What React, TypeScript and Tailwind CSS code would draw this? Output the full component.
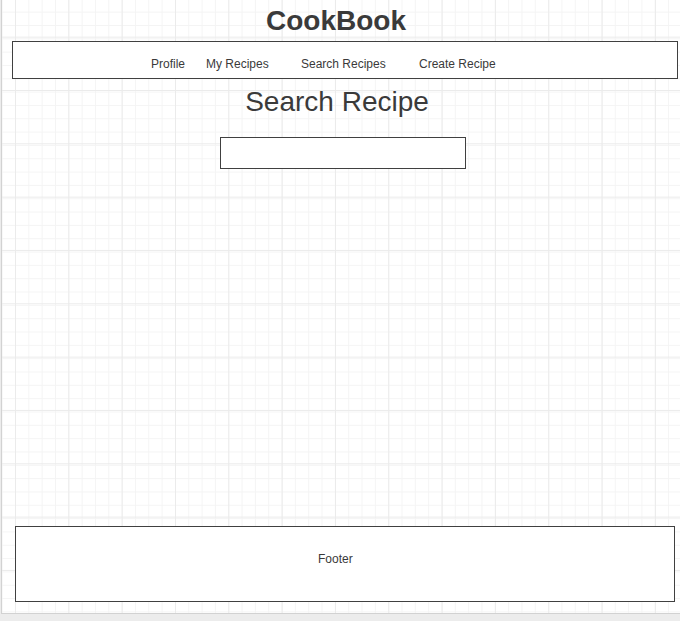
import React from 'react';

const navItems = [
    { label: 'Profile', width: 'w-[55px]' },
    { label: 'My Recipes', width: 'w-[95px]' },
    { label: 'Search Recipes', width: 'w-[118px]' },
    { label: 'Create Recipe', width: 'w-[100px]' },
];

export default function App() {
    return (
        <div className="h-[621px] w-[680px] overflow-hidden bg-[#ececec] font-['Liberation_Sans',Arial,sans-serif] text-[#3a3a3a]">
            {/* Canvas with grid */}
            <div className="ml-px flex h-[614px] flex-col border-b border-l border-[#d2d2d2] bg-white bg-[linear-gradient(to_right,#ebebeb_1px,transparent_1px),linear-gradient(to_bottom,#ebebeb_1px,transparent_1px),linear-gradient(to_right,#f4f4f4_1px,transparent_1px),linear-gradient(to_bottom,#f4f4f4_1px,transparent_1px)] bg-[size:53.33px_53.33px,53.33px_53.33px,13.33px_13.33px,13.33px_13.33px] bg-[position:13px_36.67px,13px_36.67px,13px_11.67px,13px_11.67px]">
                {/* Title */}
                <div className="flex h-[41px] w-[668px] items-center justify-center">
                    <h1 className="text-[28px] font-bold leading-[31px]">CookBook</h1>
                </div>

                {/* Nav bar */}
                <nav className="ml-[10px] flex h-[38px] w-[666px] border border-[#404040] bg-white pl-[138px] pt-[15px] text-[12px] leading-[14px]">
                    {navItems.map((item) => (
                        <span key={item.label} className={item.width}>
                            {item.label}
                        </span>
                    ))}
                </nav>

                {/* Page heading */}
                <div className="mt-[7px] flex h-[32px] w-[670px] justify-center">
                    <h2 className="text-[28px] leading-[32px]">Search Recipe</h2>
                </div>

                {/* Search input */}
                <input
                    type="text"
                    className="ml-[218px] mt-[19px] h-[32px] w-[246px] border border-[#404040] bg-white outline-none"
                />

                <div className="flex-1" />

                {/* Footer */}
                <footer className="mb-[11px] ml-[13px] h-[76px] w-[660px] border border-[#404040] bg-white pl-[302px] pt-[25px] text-[12px] leading-[14px]">
                    Footer
                </footer>
            </div>
        </div>
    );
}
